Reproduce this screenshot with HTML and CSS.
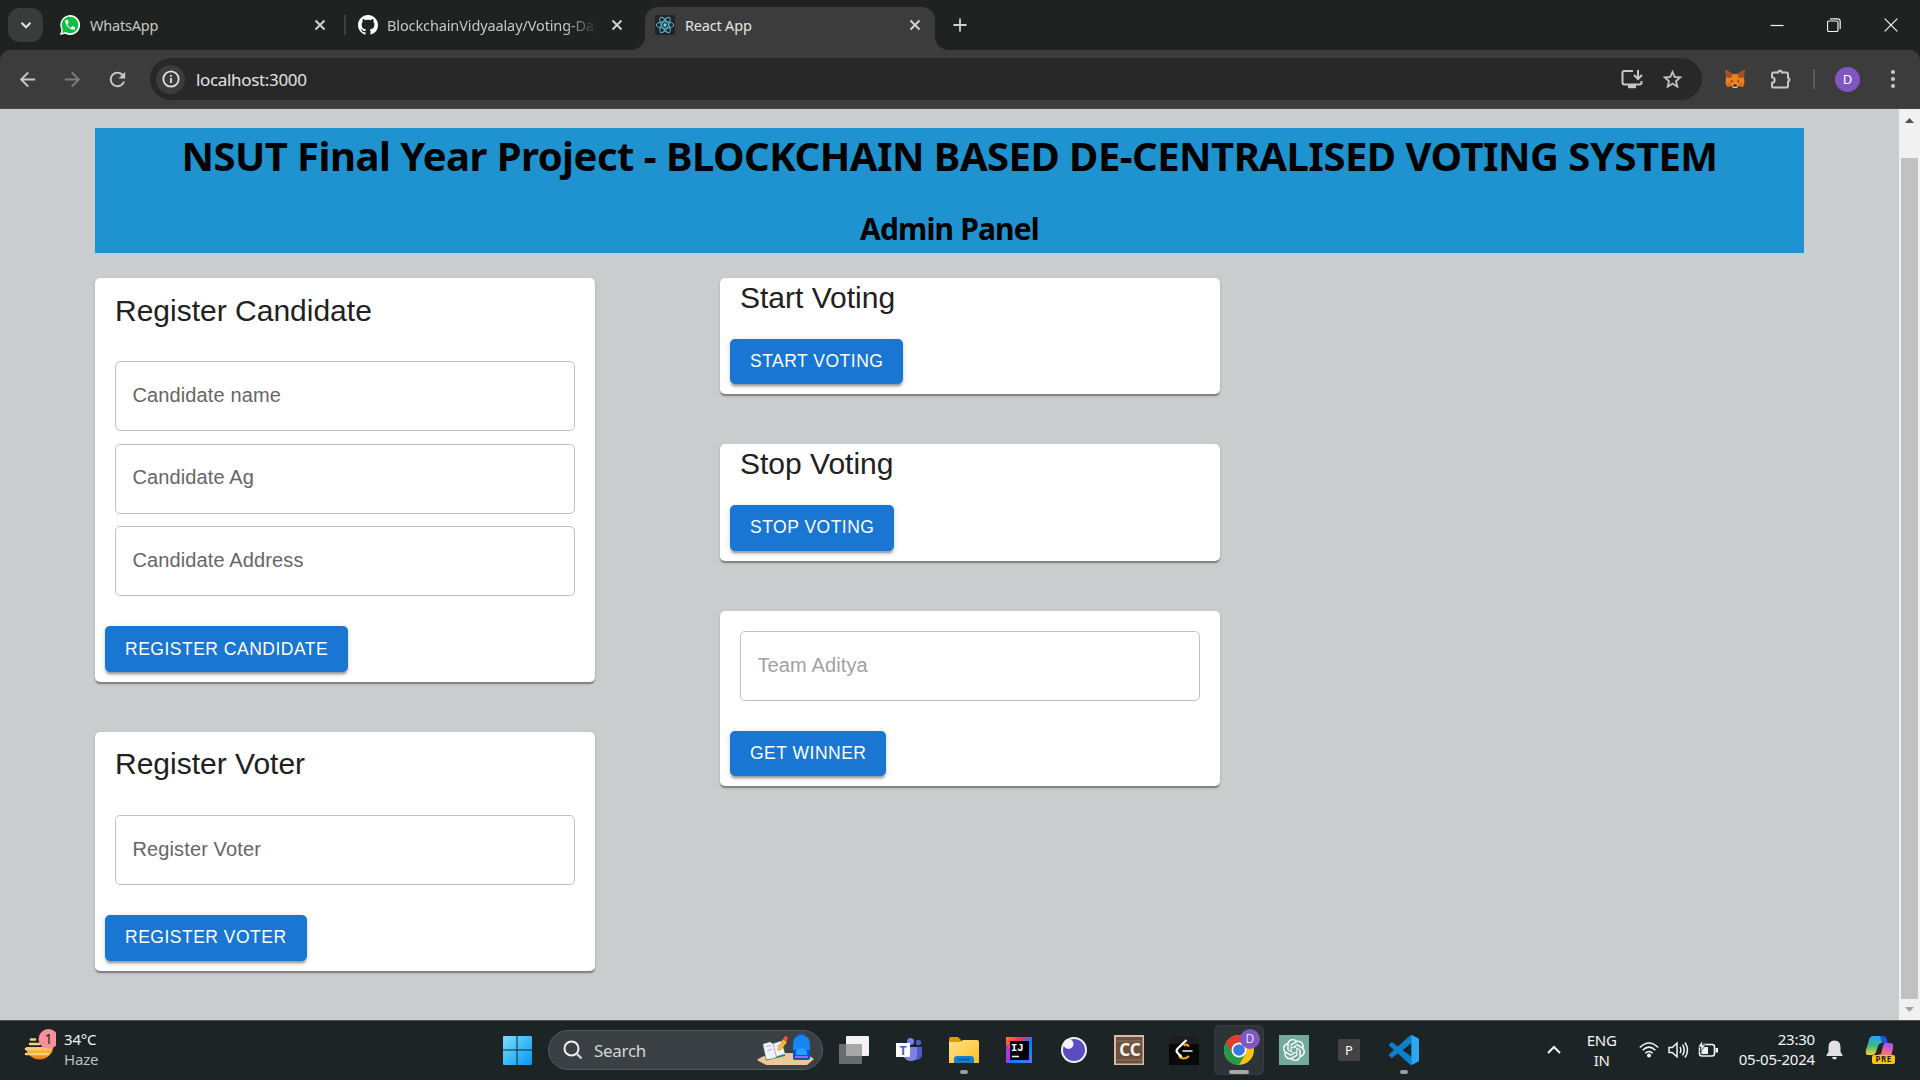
FILE: index.html
```html
<!DOCTYPE html>
<html lang="en">
<head>
<meta charset="utf-8">
<title>React App</title>
<link rel="stylesheet" href="styles.css">
</head>
<body>
<header class="tabstrip">
  <button class="tab-search"><svg width="14" height="14" viewBox="0 0 14 14"><path d="M2.5 4.8 7 9.3l4.500-4.500" fill="none" stroke="#e3e3e3" stroke-width="2"/></svg></button>
  <div class="tab tab-whatsapp">
    <svg width="20" height="20" viewBox="0 0 20 20"><path d="M0 20 1.500 14.800A9.900 9.900 0 1 1 5.400 18.700Z" fill="#fff"/><path d="M2 18 3 14.400A8.300 8.300 0 1 1 5.800 17.100Z" fill="#0cc143"/><path transform="translate(3.600 3.300) scale(.54)" d="M6.620 10.790c1.440 2.830 3.760 5.140 6.590 6.590l2.200-2.200c.27-.27.67-.36 1.020-.24 1.120.37 2.330.57 3.570.57.55 0 1 .45 1 1V20c0 .55-.45 1-1 1-9.390 0-17-7.610-17-17 0-.55.45-1 1-1h3.500c.55 0 1 .45 1 1 0 1.250.2 2.450.57 3.570.11.35.03.74-.25 1.020l-2.200 2.200z" fill="#fff"/></svg>
    <span class="tab-title">WhatsApp</span>
    <svg class="close" width="12" height="12" viewBox="0 0 12 12"><path d="M1.500 1.500l9 9M10.500 1.500l-9 9"/></svg>
  </div>
  <i class="tab-sep"></i>
  <div class="tab tab-github">
    <svg width="20" height="20" viewBox="0 0 16 16"><path fill="#fff" d="M8 0C3.580 0 0 3.580 0 8c0 3.540 2.290 6.530 5.470 7.590.4.07.55-.17.55-.38 0-.19-.01-.82-.01-1.490-2.010.37-2.530-.49-2.690-.94-.09-.23-.48-.94-.82-1.130-.28-.15-.68-.52-.01-.53.63-.01 1.080.58 1.230.82.72 1.210 1.870.87 2.330.66.07-.52.28-.87.51-1.070-1.780-.2-3.640-.89-3.640-3.950 0-.87.31-1.590.82-2.150-.08-.2-.36-1.020.08-2.120 0 0 .67-.21 2.200.82.64-.18 1.320-.27 2-.27s1.360.09 2 .27c1.530-1.040 2.200-.82 2.200-.82.44 1.100.16 1.920.08 2.120.51.56.82 1.270.82 2.150 0 3.070-1.870 3.750-3.650 3.950.29.25.54.73.54 1.480 0 1.070-.01 1.930-.01 2.200 0 .21.15.46.55.38A8.010 8.010 0 0 0 16 8c0-4.420-3.580-8-8-8Z"/></svg>
    <span class="tab-title fade">BlockchainVidyaalay/Voting-Dapp</span>
    <svg class="close" width="12" height="12" viewBox="0 0 12 12"><path d="M1.500 1.500l9 9M10.500 1.500l-9 9"/></svg>
  </div>
  <div class="tab tab-active">
    <svg width="20" height="20" viewBox="0 0 20 20"><rect width="20" height="20" rx="2" fill="#222424"/><g fill="none" stroke="#53b9d3" stroke-width="1"><ellipse cx="10" cy="10" rx="8.700" ry="3.300"/><ellipse cx="10" cy="10" rx="8.700" ry="3.300" transform="rotate(60 10 10)"/><ellipse cx="10" cy="10" rx="8.700" ry="3.300" transform="rotate(120 10 10)"/></g><circle cx="10" cy="10" r="1.700" fill="#61dafb"/></svg>
    <span class="tab-title">React App</span>
    <svg class="close" width="12" height="12" viewBox="0 0 12 12"><path d="M1.500 1.500l9 9M10.500 1.500l-9 9"/></svg>
  </div>
  <svg class="newtab" width="14" height="14" viewBox="0 0 14 14"><path d="M7 .5v13M.5 7h13" stroke="#d0d0d0" stroke-width="1.800"/></svg>
  <div class="window-controls">
    <svg width="14" height="14" viewBox="0 0 14 14"><path d="M.5 7.500h13"/></svg>
    <svg width="14" height="14" viewBox="0 0 14 14"><rect x=".5" y="3" width="10.500" height="10.500" rx="1.500"/><path d="M3 .8h7.500q2.700 0 2.700 2.700V11"/></svg>
    <svg width="14" height="14" viewBox="0 0 14 14"><path d="M.7.700l12.600 12.600M13.300.700.700 13.300"/></svg>
  </div>
</header>

<nav class="toolbar">
  <svg class="nav-icon" width="23" height="23" viewBox="0 0 24 24"><path fill="#c7c7c7" d="M20 11H7.830l5.590-5.590L12 4l-8 8 8 8 1.410-1.410L7.830 13H20v-2z"/></svg>
  <svg class="nav-icon" width="23" height="23" viewBox="0 0 24 24"><path fill="#7c7c7c" d="M4 11h12.170l-5.590-5.590L12 4l8 8-8 8-1.410-1.410L16.170 13H4v-2z"/></svg>
  <svg class="nav-icon" width="23" height="23" viewBox="0 0 24 24"><path fill="#c7c7c7" d="M17.650 6.350C16.200 4.900 14.210 4 12 4c-4.420 0-7.990 3.580-7.990 8s3.570 8 7.990 8c3.730 0 6.840-2.550 7.730-6h-2.080c-.82 2.330-3.040 4-5.650 4-3.310 0-6-2.690-6-6s2.690-6 6-6c1.660 0 3.140.69 4.220 1.780L13 11h7V4l-2.350 2.350z"/></svg>
  <div class="omnibox">
    <span class="site-info"><svg width="18" height="18" viewBox="0 0 18 18"><circle cx="9" cy="9" r="7.700" fill="none" stroke="#e3e3e3" stroke-width="1.800"/><path d="M9 8v5M9 5v1.800" stroke="#e3e3e3" stroke-width="1.800"/></svg></span>
    <span class="url">localhost:3000</span>
    <svg class="install" width="22" height="20" viewBox="0 0 22 20"><path d="M12 2H3.500Q1.500 2 1.500 4v9.500q0 2 2 2h15q2 0 2-2V12" fill="none" stroke="#c7c7c7" stroke-width="2"/><path d="M7 16h8v3.200H7z" fill="#c7c7c7"/><path d="M17 1v8M13 6l4 4 4-4" fill="none" stroke="#c7c7c7" stroke-width="2"/></svg>
    <svg class="star" width="23" height="23" viewBox="0 0 24 24"><path fill="#c7c7c7" stroke="#c7c7c7" stroke-width=".3" d="M22 9.240l-7.190-.62L12 2 9.190 8.630 2 9.240l5.460 4.730L5.820 21 12 17.270 18.180 21l-1.630-7.030L22 9.240zM12 15.400l-3.760 2.270 1-4.280-3.320-2.880 4.380-.38L12 6.100l1.710 4.040 4.380.38-3.320 2.880 1 4.280L12 15.400z"/></svg>
  </div>
  <svg class="fox" width="20" height="20" viewBox="0 0 20 20"><path d="M.5 1 8 5h4l7.500-4L19 8l.5 6-1.500 4-4.500-1-1.500 2H8l-1.500-2L2 18 .5 14 1 8Z" fill="#f0811f"/><path d="M.5.500 8 5 6 9 1 8.500ZM19.500.500 12 5l2 4 5-.5Z" fill="#a5521f"/><path d="M6 11l2.500 1.500L6 13ZM14 11l-2.500 1.500 2.500.5Z" fill="#4a3527"/><path d="M1.500 13.500h4.500l.5 3.500-4 1ZM18.500 13.500H14l-.5 3.500 4 1Z" fill="#d5711f"/><path d="M7.500 15.500h5l-.5 3.500H8Z" fill="#d5c4b4"/><path d="M8.300 15.500h3.400v2H8.300Z" fill="#161616"/></svg>
  <svg class="puzzle" width="22" height="22" viewBox="0 0 22 22"><path d="M3.500 4.500h4.700a1.800 1.800 0 0 1 3.600 0h4.700q1.500 0 1.500 1.500v4a1.900 1.900 0 0 1 0 3.700V18q0 1.500-1.500 1.500h-13Q2 19.500 2 18v-3.200c3.600-.4 3.600-5.200 0-5.600V6q0-1.500 1.500-1.500Z" fill="none" stroke="#c7c7c7" stroke-width="2"/><path d="M7.800 4a2.200 2.200 0 0 1 4.400 0ZM18.500 9.600a2.300 2.300 0 0 1 0 4.500Z" fill="#c7c7c7"/></svg>
  <i class="toolbar-sep"></i>
  <span class="avatar">D</span>
  <svg class="dots" width="6" height="20" viewBox="0 0 6 20"><g fill="#c7c7c7"><circle cx="3" cy="3" r="2.100"/><circle cx="3" cy="10" r="2.100"/><circle cx="3" cy="17" r="2.100"/></g></svg>
</nav>

<div class="viewport">
  <main class="page">
    <section class="banner">
      <h1>NSUT Final Year Project - BLOCKCHAIN BASED DE-CENTRALISED VOTING SYSTEM</h1>
      <h2>Admin Panel</h2>
    </section>
    <div class="columns">
      <div class="column">
        <section class="card card-candidate">
          <h3>Register Candidate</h3>
          <div class="fields">
            <input class="field" placeholder="Candidate name">
            <input class="field" placeholder="Candidate Ag">
            <input class="field" placeholder="Candidate Address">
          </div>
          <button class="btn">Register Candidate</button>
        </section>
        <section class="card card-voter">
          <h3>Register Voter</h3>
          <div class="fields"><input class="field" placeholder="Register Voter"></div>
          <button class="btn">Register Voter</button>
        </section>
      </div>
      <div class="column">
        <section class="card card-start">
          <h3>Start Voting</h3>
          <button class="btn">Start Voting</button>
        </section>
        <section class="card card-stop">
          <h3>Stop Voting</h3>
          <button class="btn">Stop Voting</button>
        </section>
        <section class="card card-winner">
          <div class="fields"><input class="field disabled" placeholder="Team Aditya"></div>
          <button class="btn">Get Winner</button>
        </section>
      </div>
    </div>
  </main>
  <aside class="scrollbar">
    <svg width="21" height="22" viewBox="0 0 21 22"><path d="M6 14l4.500-5 4.500 5Z" fill="#505050"/></svg>
    <div class="thumb"></div>
    <svg width="21" height="21" viewBox="0 0 21 21"><path d="M6 8l4.500 5L15 8Z" fill="#a3a3a3"/></svg>
  </aside>
</div>

<footer class="taskbar">
  <div class="weather">
    <svg width="36" height="36" viewBox="0 0 36 36"><defs><linearGradient id="sun" x1="0" y1="0" x2="0" y2="1"><stop offset="0" stop-color="#ffc83d"/><stop offset="1" stop-color="#f07a10"/></linearGradient></defs><path d="M6 19h27a13.500 12.500 0 0 1-27 0Z" fill="url(#sun)"/><path d="M11 11.500h4M10 16h9M6 21h14M25 21h4M6 26h22" stroke="#f1cf7d" stroke-width="2.600" stroke-linecap="round"/><circle cx="28.500" cy="11" r="10" fill="#ff8f9b"/><text x="28.500" y="16" text-anchor="middle" font-size="14" fill="#222">1</text></svg>
    <div class="weather-text"><span>34°C</span><span class="muted">Haze</span></div>
  </div>
  <div class="dock">
    <svg class="start" width="30" height="30" viewBox="0 0 30 30"><defs><linearGradient id="win" x1="0" y1="0" x2="1" y2="1"><stop offset="0" stop-color="#7fdcff"/><stop offset=".5" stop-color="#3cbcf8"/><stop offset="1" stop-color="#0c93f5"/></linearGradient></defs><path fill="url(#win)" d="M2 1h12.500v13.500H1V2q0-1 1-1ZM15.500 1H29q1 0 1 1v12.500H15.500ZM1 15.500h13.500V30H2q-1 0-1-1ZM15.500 15.500H30V29q0 1-1 1H15.500Z"/></svg>
    <div class="search">
      <svg width="20" height="20" viewBox="0 0 20 20"><circle cx="8.500" cy="8.500" r="7" fill="none" stroke="#f0f0f0" stroke-width="2"/><path d="M13.500 13.500l5 5" stroke="#d5d5d5" stroke-width="2.400"/></svg>
      <span>Search</span>
      <svg class="school" width="58" height="34" viewBox="0 0 58 34"><path d="M0 27Q8 20 28 20 50 19 57 26L50 32H9Z" fill="#edc79b"/><path d="M6 14 18 9l9 2 1 12-19 4.500Z" fill="#1d8b50"/><path d="M6 11l7-2 3 2 8-3 4 13-7.500 2-3 2-8 1.500Z" fill="#f4f0ff"/><path d="M16 11l3.500 13M9 13.500l5-1M10 17.500l5-1M20 13l4-1M21 17l4-1" stroke="#b7a9d6" stroke-width="1"/><path d="M21 14l5-8 4 3-6 8-4 1Z" fill="#f9b535"/><path d="M26 6l2-3q2 0 3 2l-2 4Z" fill="#ef5350"/><path d="M40 4q4-6 8 0" fill="none" stroke="#075cc4" stroke-width="2"/><path d="M36 13q0-11 8.500-11T53 13v13H36Z" fill="#1686f5"/><path d="M36 17h17v8q0 2-2 2H38q-2 0-2-2Z" fill="#0b54cf"/><path d="M39 18q5-6 11 0v4H39Z" fill="#21a0ff"/><path d="M38 23h13v2H38Z" fill="#a164eb"/></svg>
    </div>
    <div class="apps">
      <svg viewBox="0 0 50 50"><rect x="17" y="11" width="23" height="20" rx="1" fill="#f2f2f2"/><rect x="10" y="19" width="23" height="20" rx="1" fill="#747474" fill-opacity=".9"/><path d="M17 19h16v12H17z" fill="#a7a7a7"/></svg>
      <svg viewBox="0 0 50 50"><circle cx="26.500" cy="16.500" r="3.500" fill="#7b83eb"/><circle cx="34.500" cy="17.500" r="2.700" fill="#5059c9"/><path d="M29 22h9v7q0 6-7 6Z" fill="#5059c9"/><path d="M19 22h14v8q0 6-6 6-5 0-7-4Z" fill="#7b83eb"/><rect x="12" y="18" width="14" height="14" fill="#fff"/><text x="19" y="29.500" text-anchor="middle" font-size="12.500" font-weight="700" fill="#5059c9">T</text></svg>
      <svg viewBox="0 0 50 50"><defs><linearGradient id="fold" x1="0" y1="0" x2="1" y2="1"><stop offset="0" stop-color="#ffe28a"/><stop offset="1" stop-color="#ffc022"/></linearGradient></defs><path d="M10 14q0-2 2-2h7l3 3v5H10Z" fill="#e19a00"/><path d="M10 17h11l3-2h14q2 0 2 2v21H10Z" fill="url(#fold)"/><path d="M15 38v-4q0-3 3-3h14q3 0 3 3v4Z" fill="#1280ce"/><path d="M19 34.500h12" stroke="#0a5799" stroke-width="1.300"/><rect x="21" y="45" width="8" height="4" rx="2" fill="#9b9d9e"/></svg>
      <svg viewBox="0 0 50 50"><defs><linearGradient id="ij" x1="0" y1="0" x2="1" y2="1"><stop offset="0" stop-color="#fc801d"/><stop offset=".3" stop-color="#fe2e6b"/><stop offset=".55" stop-color="#087cfa"/><stop offset=".8" stop-color="#1e83fa"/><stop offset="1" stop-color="#7b63f5"/></linearGradient></defs><rect x="12" y="12" width="26" height="26" fill="url(#ij)"/><path d="M12 28V19l4 6v13h-4Z" fill="#a13be8"/><rect x="16" y="16" width="19" height="19" fill="#050008"/><text x="17" y="25.500" font-size="10.500" font-weight="700" class="mono" fill="#fff">IJ</text><path d="M18 31.500h7" stroke="#fff" stroke-width="1.500"/></svg>
      <svg viewBox="0 0 50 50"><circle cx="25" cy="25" r="13" fill="#f3f3f6"/><circle cx="25" cy="25" r="11" fill="#5b4bc4"/><circle cx="19.500" cy="19" r="5" fill="#f3f3f6"/></svg>
      <svg viewBox="0 0 50 50"><rect x="10" y="10" width="30" height="30" fill="#d8bba2"/><rect x="12" y="12" width="26.500" height="26.500" fill="#6b5142"/><path d="M12 16h26M12 35h26" stroke="#80624f" stroke-width="2"/><text x="26" y="31" text-anchor="middle" font-size="17" font-weight="700" fill="#fff4e8">CC</text></svg>
      <svg viewBox="0 0 50 50"><rect x="10" y="11" width="30" height="29" fill="#080808"/><path d="M10 11h30v8H10z" fill="#1d1d1d"/><path d="M24.500 20.500q3-2 5.500 1M20 29q0 4 4.500 4.500 3 0 5.500-2.500" fill="none" stroke="#f5a11c" stroke-width="2.200"/><path d="M27.500 15l-8.800 8.500q-2.200 2.500 0 4.500l4 4" fill="none" stroke="#fff" stroke-width="2.200"/><path d="M23.500 26h10" stroke="#b3b3b3" stroke-width="2"/></svg>
      <svg class="running" viewBox="0 0 50 50"><circle cx="25" cy="25" r="15" fill="#fbc116"/><path d="M25 25 12 17.500A15 15 0 0 1 38 17.500H25Z" fill="#e33b2e"/><path d="M12 17.500A15 15 0 0 0 25 40l6.500-11.300L25 25Z" fill="#229a4a"/><path d="M25 17.500H12l6.500 11Z" fill="#e33b2e"/><circle cx="25" cy="25" r="7.500" fill="#fff"/><circle cx="25" cy="25" r="5.800" fill="#3578e5"/><circle cx="36" cy="14" r="10" fill="#7e57c2"/><text x="36" y="18.300" text-anchor="middle" font-size="12" fill="#e9def8">D</text><rect x="15" y="45" width="20" height="4" rx="2" fill="#aaa6a5"/></svg>
      <svg viewBox="0 0 50 50"><rect x="10" y="10" width="30" height="30" fill="#74aa9c"/><path transform="translate(13.900 13.900) scale(.925)" fill="#fff" d="M22.2819 9.8211a5.9847 5.9847 0 0 0-.5157-4.9108 6.0462 6.0462 0 0 0-6.5098-2.9A6.0651 6.0651 0 0 0 4.9807 4.1818a5.9847 5.9847 0 0 0-3.9977 2.9 6.0462 6.0462 0 0 0 .7427 7.0966 5.98 5.98 0 0 0 .511 4.9107 6.051 6.051 0 0 0 6.5146 2.9001A5.9847 5.9847 0 0 0 13.2599 24a6.0557 6.0557 0 0 0 5.7718-4.2058 5.9894 5.9894 0 0 0 3.9977-2.9001 6.0557 6.0557 0 0 0-.7475-7.0729zm-9.022 12.6081a4.4755 4.4755 0 0 1-2.8764-1.0408l.1419-.0804 4.7783-2.7582a.7948.7948 0 0 0 .3927-.6813v-6.7369l2.02 1.1686a.071.071 0 0 1 .038.052v5.5826a4.504 4.504 0 0 1-4.4945 4.4944zm-9.6607-4.1254a4.4708 4.4708 0 0 1-.5346-3.0137l.142.0852 4.783 2.7582a.7712.7712 0 0 0 .7806 0l5.8428-3.3685v2.3324a.0804.0804 0 0 1-.0332.0615L9.74 19.9502a4.4992 4.4992 0 0 1-6.1408-1.6464zM2.3408 7.8956a4.485 4.485 0 0 1 2.3655-1.9728V11.6a.7664.7664 0 0 0 .3879.6765l5.8144 3.3543-2.0201 1.1685a.0757.0757 0 0 1-.071 0l-4.8303-2.7865A4.504 4.504 0 0 1 2.3408 7.872zm16.5963 3.8558L13.1038 8.364 15.1192 7.2a.0757.0757 0 0 1 .071 0l4.8303 2.7913a4.4944 4.4944 0 0 1-.6765 8.1042v-5.6772a.79.79 0 0 0-.407-.667zm2.0107-3.0231l-.142-.0852-4.7735-2.7818a.7759.7759 0 0 0-.7854 0L9.409 9.2297V6.8974a.0662.0662 0 0 1 .0284-.0615l4.8303-2.7866a4.4992 4.4992 0 0 1 6.6802 4.66zM8.3065 12.863l-2.02-1.1638a.0804.0804 0 0 1-.038-.0567V6.0742a4.4992 4.4992 0 0 1 7.3757-3.4537l-.142.0805L8.704 5.459a.7948.7948 0 0 0-.3927.6813zm1.0976-2.3654l2.602-1.4998 2.6069 1.4998v2.9994l-2.5974 1.4997-2.6067-1.4997Z"/></svg>
      <svg viewBox="0 0 50 50"><rect x="14" y="14" width="22" height="22" rx="1" fill="#434343"/><text x="25" y="30" text-anchor="middle" font-size="13" fill="#fff">P</text></svg>
      <svg viewBox="0 0 50 50"><g transform="translate(10 10) scale(1.250)"><path fill="#0f7fc9" d="M23.150 2.587L18.210.21a1.494 1.494 0 0 0-1.705.29l-9.460 8.630-4.120-3.128a.999.999 0 0 0-1.276.057L.327 7.261A1 1 0 0 0 .326 8.740L3.899 12 .326 15.260a1 1 0 0 0 .001 1.479L1.650 17.940a.999.999 0 0 0 1.276.057l4.120-3.128 9.460 8.630a1.492 1.492 0 0 0 1.704.29l4.942-2.377A1.500 1.500 0 0 0 24 20.060V3.939a1.500 1.500 0 0 0-.85-1.352zm-5.146 14.861L10.826 12l7.178-5.448v10.896z"/><path fill="#2aa9f1" d="M18 0l5.150 2.587a1.500 1.500 0 0 1 .85 1.352V20.060a1.500 1.500 0 0 1-.85 1.350L18 24Z"/></g><rect x="21" y="45" width="8" height="4" rx="2" fill="#9b9d9e"/></svg>
    </div>
  </div>
  <div class="tray">
    <svg class="caret" width="14" height="10" viewBox="0 0 14 10"><path d="M1 8l6-6 6 6" fill="none" stroke="#f5f5f5" stroke-width="2"/></svg>
    <div class="lang"><span>ENG</span><span>IN</span></div>
    <svg width="20" height="16" viewBox="0 0 20 16"><g fill="none" stroke="#f2f2f2" stroke-width="1.500"><path d="M.8 5.500Q10-3.500 19.200 5.500M3.600 8.300Q10 2 16.400 8.300M6.300 11.200q3.700-3.500 7.400 0"/></g><circle cx="10" cy="13.500" r="2" fill="#f2f2f2"/></svg>
    <svg width="21" height="18" viewBox="0 0 21 18"><g fill="none" stroke="#f2f2f2" stroke-width="1.500"><path d="M1 6.500h3.200L9 2.200v13.600L4.200 11.500H1ZM12 6q1.800 3 0 6M14.500 3.700q3.500 5.300 0 10.600M17 1.500q5 7.500 0 15"/></g></svg>
    <svg class="battery" width="20" height="18" viewBox="0 0 20 18"><rect x="1.500" y="4.500" width="15" height="11.500" rx="2.500" fill="none" stroke="#f2f2f2" stroke-width="1.600"/><rect x="3.500" y="7" width="6.500" height="7" fill="#f2f2f2"/><path d="M17.500 8h2.500v4.500h-2.500z" fill="#f2f2f2"/><path d="M4.500 0 0 7h3L2 12l6-7H4.500Z" fill="#f2f2f2" stroke="#1c2426" stroke-width=".8"/></svg>
    <div class="clock"><span>23:30</span><span>05-05-2024</span></div>
    <svg width="17" height="20" viewBox="0 0 17 20"><path d="M8.500.5q6 0 6 6.500v5l2 3v1H.5v-1l2-3V7q0-6.500 6-6.500ZM6 17h5q-.5 2.500-2.500 2.500T6 17Z" fill="#e1e1e1"/></svg>
    <svg class="copilot" width="30" height="30" viewBox="0 0 30 30"><defs><linearGradient id="cpa" x1="0" y1="0" x2="0" y2="1"><stop offset="0" stop-color="#23a4ff"/><stop offset=".5" stop-color="#39b984"/><stop offset="1" stop-color="#ffd02a"/></linearGradient><linearGradient id="cpb" x1="0" y1="1" x2=".3" y2="0"><stop offset="0" stop-color="#ff8a4f"/><stop offset=".5" stop-color="#e75fa6"/><stop offset="1" stop-color="#a259f0"/></linearGradient></defs><path d="M8 1h9q3 0 4 4l1 3h-5q-3 0-4 3l-2 6q-1 3-4 3H3q-3 0-2-5L4 5q1-4 4-4Z" fill="url(#cpa)"/><path d="M15 1h3q3 0 4 4l1 3h-6Z" fill="#1c55d8"/><path d="M20 8h5q4 0 3 5l-1.500 7H12l4-1 2-8q.5-3 2-3Z" fill="url(#cpb)"/><rect x="7" y="20" width="23" height="9" rx="2" fill="#fdc60b"/><text x="18.700" y="27.400" text-anchor="middle" font-size="8" font-weight="700" fill="#222" letter-spacing=".5">PRE</text></svg>
  </div>
</footer>
</body>
</html>
```
FILE: styles.css
```css
* { box-sizing: border-box; }
body {
  margin: 0;
  width: 1920px;
  height: 1080px;
  overflow: hidden;
  display: flex;
  flex-direction: column;
  background: #202221;
  font-family: "Noto Sans", "Open Sans", sans-serif;
  font-size: 15px;
}
svg { display: block; flex: none; }
button { border: 0; padding: 0; font: inherit; }
i { flex: none; }

/* tab strip */
.tabstrip { height: 50px; flex: none; display: flex; align-items: center; padding-left: 8px; color: #c5c7c6; }
.tab-search { width: 35px; height: 34px; border-radius: 12px; background: #3a3b3b; display: grid; place-items: center; }
.tab { display: flex; align-items: center; gap: 10px; }
.tab-title { flex: 1; white-space: nowrap; overflow: hidden; font-size: 14.500px; letter-spacing: -.2px; }
.tab-whatsapp { width: 266px; margin-left: 17px; }
.tab-sep { width: 2px; height: 20px; margin: 0 12px 0 18px; background: #3f4140; }
.tab-github { width: 265px; }
.tab-github .tab-title { flex: 0 0 210px; margin: 0 4px 0 -1px; letter-spacing: -.12px; }
.fade { -webkit-mask-image: linear-gradient(90deg, #000 85%, transparent); mask-image: linear-gradient(90deg, #000 85%, transparent); }
.close { fill: none; stroke: #d2d4d3; stroke-width: 1.900; }
.tab-active {
  width: 290px;
  height: 43px;
  align-self: flex-end;
  margin-left: 22px;
  padding: 0 14px 7px 10px;
  border-radius: 13px 13px 0 0;
  background: #3c3c3c;
  color: #e4e4e4;
  position: relative;
}
.tab-active::before, .tab-active::after { content: ""; position: absolute; bottom: 0; width: 13px; height: 13px; }
.tab-active::before { left: -13px; background: radial-gradient(circle at 0 0, transparent 12.500px, #3c3c3c 13px); }
.tab-active::after { right: -13px; background: radial-gradient(circle at 100% 0, transparent 12.500px, #3c3c3c 13px); }
.newtab { margin-left: 18px; }
.window-controls { display: flex; gap: 43px; margin-left: auto; padding-right: 22px; }
.window-controls svg { fill: none; stroke: #f4f4f4; stroke-width: 1.200; }

/* toolbar */
.toolbar { height: 59px; flex: none; display: flex; align-items: center; padding: 0 24px 0 16px; background: #3c3c3c; border-radius: 10px 10px 0 0; border-bottom: 1px solid #474747; }
.nav-icon { margin-right: 22px; }
.nav-icon:nth-child(3) { margin-right: 21px; }
.omnibox { width: 1552px; height: 42px; border-radius: 21px; background: #282828; display: flex; align-items: center; padding: 0 18px 0 6px; }
.site-info { width: 29px; height: 29px; border-radius: 50%; background: #3c3c3c; display: grid; place-items: center; }
.url { flex: 1; margin-left: 11px; color: #e2e2e2; font-size: 17px; letter-spacing: -.33px; }
.star { margin-left: 18px; }
.fox { margin-left: 23px; }
.puzzle { margin-left: 25px; }
.toolbar-sep { width: 2px; height: 20px; margin-left: 21px; background: #5b5b5b; }
.avatar { width: 25px; height: 25px; margin-left: 20px; border-radius: 50%; background: #7e57c2; color: #fff; display: grid; place-items: center; font-size: 13px; }
.dots { margin-left: auto; }

/* page */
.viewport { flex: 1; display: flex; min-height: 0; }
.page { flex: 1; padding: 19px 95px 0; background: #cbccce; font-family: "Liberation Sans", Arial, sans-serif; }
.banner { height: 125px; background: #1f93cf; color: #000; text-align: center; font-family: "Noto Sans", "Open Sans", sans-serif; }
.banner h1 { margin: 0; height: 58px; font-size: 40px; line-height: 56px; white-space: nowrap; letter-spacing: -.52px; }
.banner h2 { margin: 0; padding-top: 23px; font-size: 30px; line-height: 40px; letter-spacing: -.85px; }
.columns { display: flex; gap: 125px; margin-top: 25px; }
.column { width: 500px; display: flex; flex-direction: column; gap: 50px; }
.card {
  padding: 0 20px;
  border-radius: 5px;
  background: #fff;
  box-shadow: 0 2.500px 1.250px -1.250px rgba(0,0,0,.2), 0 1.250px 1.250px rgba(0,0,0,.14), 0 1.250px 3.750px rgba(0,0,0,.12);
}
.card h3 { margin: 0; color: #212121; font-size: 30px; font-weight: 400; line-height: 40px; }
.card-candidate { height: 404px; padding-top: 13px; }
.card-voter { height: 239px; padding-top: 12px; }
.card-voter h3 + .fields { margin-top: 31px; }
.card-start { height: 116px; }
.card-stop { height: 117px; }
.card-winner { height: 175px; padding-top: 20px; }
.fields { display: flex; flex-direction: column; gap: 12.500px; }
h3 + .fields { margin-top: 30px; }
.field {
  height: 70px;
  padding: 0 17px 2px;
  border: 1px solid #c2c2c2;
  border-radius: 5px;
  background: #fff;
  font: 20px "Liberation Sans", Arial, sans-serif;
  letter-spacing: .13px;
  text-indent: -.6px;
}
.field::placeholder { color: #666; opacity: 1; }
.field.disabled::placeholder { color: #a2a2a2; }
.btn {
  height: 46px;
  margin: 30px 0 0 -10px;
  padding: 0 20px;
  border-radius: 5px;
  background: #1976d2;
  color: #fff;
  font: 17.500px "Liberation Sans", Arial, sans-serif;
  letter-spacing: .5px;
  text-transform: uppercase;
  box-shadow: 0 3.750px 1.250px -2.500px rgba(0,0,0,.2), 0 2.500px 2.500px rgba(0,0,0,.14), 0 1.250px 6.250px rgba(0,0,0,.12);
}
.card-start .btn, .card-stop .btn { margin-top: 21px; }
.card-start .btn, .card-winner .btn { height: 45px; }
.card-voter .btn, .card-stop .btn { padding-bottom: 1px; }
.card-winner .btn { padding-right: 19px; }

.scrollbar { width: 21px; background: #f1f1f1; display: flex; flex-direction: column; }
.thumb { flex: 1; margin: 27px 2px 0; background: #c1c1c1; }

/* taskbar */
.taskbar { height: 60px; flex: none; display: flex; align-items: center; padding-bottom: 1px; background: #1c2426; border-top: 1px solid #49514f; color: #f4f4f4; }
.weather { width: 503px; display: flex; padding-left: 20px; gap: 8px; align-items: center; }
.weather svg { margin-top: -8px; }
.weather-text, .lang, .clock { display: flex; flex-direction: column; line-height: 20px; font-size: 15px; letter-spacing: -.2px; }
.weather-text, .clock { padding-bottom: 3px; }
.lang { padding-bottom: 1px; }
.muted { color: #bdc0c0; }
.dock { display: flex; align-items: center; }
.start { margin-left: -1px; }
.search { width: 275px; height: 40px; margin-left: 16px; padding: 0 7px 0 14px; border: 1px solid #535a5c; border-radius: 20px; background: #3a4043; display: flex; align-items: center; color: #d4d6d6; font-size: 17px; }
.search span { flex: 1; margin-left: 11px; letter-spacing: -.3px; }
.apps { display: flex; gap: 5px; margin-left: 6px; }
.apps svg { width: 50px; height: 50px; border-radius: 6px; }
.running { background: #2c3437; box-shadow: inset 0 0 0 1px #353d40; }
.mono { font-family: "Liberation Mono", monospace; }
.tray { margin-left: auto; padding-right: 25px; display: flex; align-items: center; }
.lang { width: 40px; margin: 0 17px 0 21px; text-align: center; }
.tray > svg:nth-of-type(2) { margin-right: 9px; }
.tray > svg:nth-of-type(3) { margin-right: 9px; }
.battery { margin-top: -2px; }
.clock { margin: 0 11px 0 21px; text-align: right; }
.copilot { margin-left: 22px; }
```
